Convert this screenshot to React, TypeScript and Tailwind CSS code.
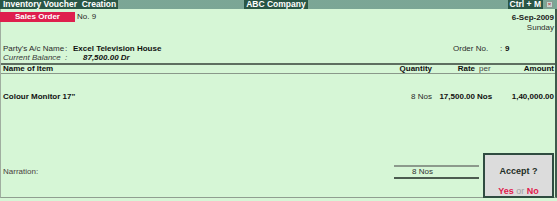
export default function App() {
  return (
    <div className="w-[557px] h-[201px] overflow-hidden bg-[#d6f6d6] flex flex-col font-['Liberation_Sans',Arial,sans-serif] text-[8px] leading-none text-[#2a2a2a]">
      {/* Title bar */}
      <div className="h-[9px] flex items-center bg-[#2a5646] bg-[radial-gradient(circle,#7fa999_0.7px,transparent_0.9px)] bg-[length:2px_2px] text-white font-bold text-[8.5px]">
        <span className="bg-[#2a5646] pl-[3px] pr-[2px] leading-[9px]">Inventory Voucher&nbsp; Creation</span>
        <span className="bg-[#2a5646] px-[2px] leading-[9px] ml-[126px]">ABC Company</span>
        <div className="ml-auto flex items-center">
          <span className="bg-[#2a5646] px-[2px] leading-[9px]">Ctrl + M</span>
          <span className="w-[7px] h-[7px] ml-[3px] mr-[4px] bg-[#c8d8d0] border border-[#8a9a90] text-[#c04050] text-[6px] leading-[5px] text-center">×</span>
        </div>
      </div>

      {/* Voucher body */}
      <div className="flex-1 flex flex-col border-l border-l-[#a0aea0] border-r-2 border-r-[#3d5a4c] border-b border-b-[#909e90] mb-[3px]">
        {/* Voucher type and date */}
        <div className="flex justify-between pt-[3px]">
          <div className="flex items-start">
            <div className="w-[75px] h-[10px] -ml-px bg-[#de1f4d] text-white font-bold text-center leading-[10px]">Sales Order</div>
            <span className="ml-[2px] leading-[10px]">No. 9</span>
          </div>
          <div className="text-right pr-px">
            <div className="font-bold leading-[10px] mt-[1px] text-[#1a1a1a]">6-Sep-2009</div>
            <div className="leading-[10px]">Sunday</div>
          </div>
        </div>

        {/* Party */}
        <div className="flex h-[9px] items-center mt-[11px]">
          <span className="w-[64px] pl-[2px]">Party's A/c Name</span>
          <span className="w-[8px]">:</span>
          <span className="font-bold text-[#111]">Excel Television House</span>
          <span className="ml-auto w-[47px]">Order No.</span>
          <span className="w-[5px]">:</span>
          <span className="font-bold text-[#111] w-[50px]">9</span>
        </div>
        <div className="flex h-[9px] items-center italic">
          <span className="w-[64px] pl-[2px] text-[#3a3a3a]">Current Balance</span>
          <span className="w-[18px]">:</span>
          <span className="font-bold text-[#111]">87,500.00 Dr</span>
        </div>

        {/* Column headers */}
        <div className="flex h-[11px] items-center mt-[1px] border-t-2 border-t-[#5e6e60] border-b border-b-[#8a988a] font-bold text-[#111]">
          <span className="flex-1 pl-[2px]">Name of Item</span>
          <span className="w-[50px] text-right">Quantity</span>
          <span className="w-[43px] text-right">Rate</span>
          <span className="w-[27px] pl-[4px] font-normal text-[#444]">per</span>
          <span className="w-[53px] text-right pr-px">Amount</span>
        </div>

        {/* Item */}
        <div className="flex h-[9px] items-center mt-[18px]">
          <span className="flex-1 pl-[2px] font-bold text-[#111]">Colour Monitor 17"</span>
          <span className="w-[50px] text-right">8 Nos</span>
          <span className="w-[43px] text-right font-bold text-[#111]">17,500.00</span>
          <span className="w-[27px] pl-[2px] font-bold text-[#111]">Nos</span>
          <span className="w-[53px] text-right pr-px font-bold text-[#111]">1,40,000.00</span>
        </div>

        <div className="flex-1" />

        {/* Narration and total */}
        <div className="flex items-center mb-[18px]">
          <span className="pl-[2px] text-[#4a4040]">Narration:</span>
          <div className="ml-auto mr-[76px] w-[85px] h-[14px] border-t-2 border-t-[#8c9a8c] border-b-2 border-b-[#4c5c50] flex items-center">
            <span className="w-[39px] text-right text-[#333]">8 Nos</span>
          </div>
        </div>
      </div>

      {/* Accept prompt */}
      <div className="absolute left-[483px] top-[153px] w-[71px] h-[45px] bg-[#dcdcdc] border-2 border-[#2f4c40] flex flex-col items-center font-bold text-[9px]">
        <div className="mt-[12px] text-[#1e2e26]">Accept ?</div>
        <div className="mt-[11px]">
          <span className="text-[#e0204c]">Yes</span>
          <span className="text-[#a0a0a0] font-normal"> or </span>
          <span className="text-[#e0204c]">No</span>
        </div>
      </div>
    </div>
  );
}
